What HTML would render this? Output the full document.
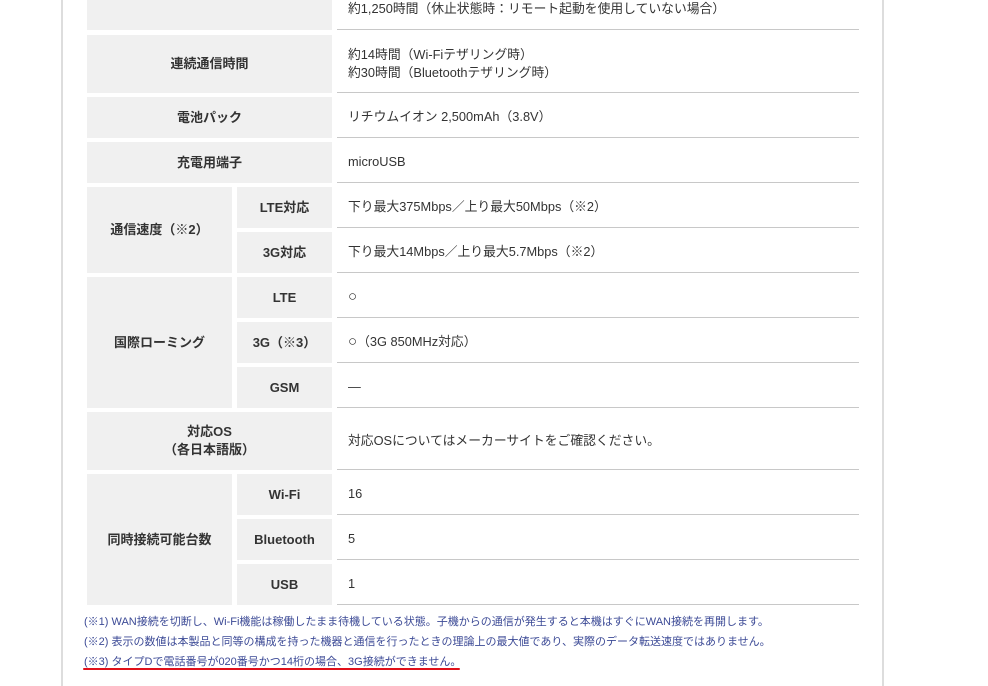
<!DOCTYPE html>
<html><head><meta charset="utf-8"><style>
body{margin:0;width:988px;height:686px;background:#fff;position:relative;overflow:hidden;font-family:"Liberation Sans","Noto Sans CJK JP",sans-serif;}
.b{position:absolute;top:0;height:686px;width:2px;background:#ddd}
.g{position:absolute;background:#f0f0f0;display:flex;align-items:center;justify-content:center;font-size:13px;font-weight:bold;color:#333;text-align:center;line-height:18px}
.v{position:absolute;left:337px;width:522px;border-bottom:1px solid #c8c8c8;display:flex;align-items:center;padding-left:11px;box-sizing:border-box;font-size:12.8px;color:#333;line-height:18px}
.n{position:absolute;left:84px;font-size:11px;color:#3c4a96;white-space:nowrap}
</style></head><body>
<div class="b" style="left:61px"></div><div class="b" style="left:882px"></div>

<div class="g" style="left:87px;top:0;width:245px;height:30px"></div>
<div class="v" style="top:0;height:30px;align-items:flex-start;padding-top:0">約1,250時間（休止状態時：リモート起動を使用していない場合）</div>

<div class="g" style="left:87px;top:35px;width:245px;height:58px">連続通信時間</div>
<div class="v" style="top:35px;height:58px">約14時間（Wi-Fiテザリング時）<br>約30時間（Bluetoothテザリング時）</div>

<div class="g" style="left:87px;top:97px;width:245px;height:41px">電池パック</div>
<div class="v" style="top:97px;height:41px">リチウムイオン 2,500mAh（3.8V）</div>

<div class="g" style="left:87px;top:142px;width:245px;height:41px">充電用端子</div>
<div class="v" style="top:142px;height:41px">microUSB</div>

<div class="g" style="left:87px;top:187px;width:145px;height:86px">通信速度（※2）</div>
<div class="g" style="left:237px;top:187px;width:95px;height:41px">LTE対応</div>
<div class="v" style="top:187px;height:41px">下り最大375Mbps／上り最大50Mbps（※2）</div>
<div class="g" style="left:237px;top:232px;width:95px;height:41px">3G対応</div>
<div class="v" style="top:232px;height:41px">下り最大14Mbps／上り最大5.7Mbps（※2）</div>

<div class="g" style="left:87px;top:277px;width:145px;height:131px">国際ローミング</div>
<div class="g" style="left:237px;top:277px;width:95px;height:41px">LTE</div>
<div class="v" style="top:277px;height:41px"><span style="font-size:15px">○</span></div>
<div class="g" style="left:237px;top:322px;width:95px;height:41px">3G（※3）</div>
<div class="v" style="top:322px;height:41px"><span style="font-size:15px">○</span>（3G 850MHz対応）</div>
<div class="g" style="left:237px;top:367px;width:95px;height:41px">GSM</div>
<div class="v" style="top:367px;height:41px">―</div>

<div class="g" style="left:87px;top:412px;width:245px;height:58px">対応OS<br>（各日本語版）</div>
<div class="v" style="top:412px;height:58px">対応OSについてはメーカーサイトをご確認ください。</div>

<div class="g" style="left:87px;top:474px;width:145px;height:131px">同時接続可能台数</div>
<div class="g" style="left:237px;top:474px;width:95px;height:41px">Wi-Fi</div>
<div class="v" style="top:474px;height:41px">16</div>
<div class="g" style="left:237px;top:519px;width:95px;height:41px">Bluetooth</div>
<div class="v" style="top:519px;height:41px">5</div>
<div class="g" style="left:237px;top:564px;width:95px;height:41px">USB</div>
<div class="v" style="top:564px;height:41px">1</div>

<div class="n" style="top:613px">(※1) WAN接続を切断し、Wi-Fi機能は稼働したまま待機している状態。子機からの通信が発生すると本機はすぐにWAN接続を再開します。</div>
<div class="n" style="top:633px">(※2) 表示の数値は本製品と同等の構成を持った機器と通信を行ったときの理論上の最大値であり、実際のデータ転送速度ではありません。</div>
<div class="n" style="top:653px">(※3) タイプDで電話番号が020番号かつ14桁の場合、3G接続ができません。</div>
<div style="position:absolute;left:83px;top:668px;width:377px;height:2px;background:#e0101a;border-radius:1px"></div>
</body></html>
